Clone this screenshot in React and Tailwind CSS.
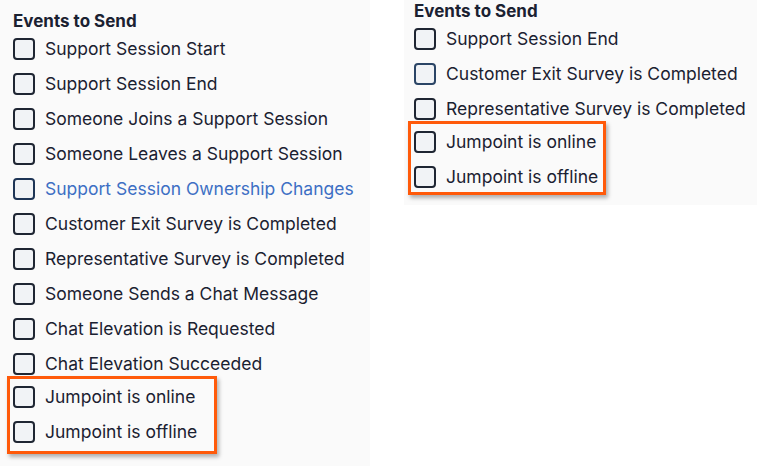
import React from "react";

const leftEvents = [
  { label: "Support Session Start" },
  { label: "Support Session End" },
  { label: "Someone Joins a Support Session" },
  { label: "Someone Leaves a Support Session" },
  { label: "Support Session Ownership Changes", hover: true },
  { label: "Customer Exit Survey is Completed" },
  { label: "Representative Survey is Completed" },
  { label: "Someone Sends a Chat Message" },
  { label: "Chat Elevation is Requested" },
  { label: "Chat Elevation Succeeded" },
];

const rightEvents = [
  { label: "Support Session End" },
  { label: "Customer Exit Survey is Completed", focus: true },
  { label: "Representative Survey is Completed" },
];

const jumpEvents = ["Jumpoint is online", "Jumpoint is offline"];

const EventRow = ({ label, hover, focus }) => {
  let boxColor = "border-[#1f2633]";
  if (hover) boxColor = "border-[#1e3556]";
  if (focus) boxColor = "border-[#2b4566]";

  return (
    <label className="flex h-[35px] shrink-0 items-center gap-[10px]">
      <span
        className={
          "block h-[22px] w-[22px] shrink-0 rounded-[4px] border-2 bg-[#f1f3f6] " +
          boxColor
        }
      />
      <span
        className={
          "text-[17.5px] leading-none whitespace-nowrap " +
          (hover ? "text-[#3d6fc4]" : "text-[#1a2131]")
        }
      >
        {label}
      </span>
    </label>
  );
};

// orange callout around the new jumpoint events
const Highlight = ({ children, className }) => (
  <div
    className={
      "-ml-[6px] flex flex-col border-[3px] border-[#ff5a0a] pl-[3px] shadow-[2px_3px_4px_rgba(0,0,0,0.3)] " +
      className
    }
  >
    {children}
  </div>
);

const EventsPanel = ({ events, className, boxClass }) => (
  <div className={className}>
    <h3 className="text-[17px] leading-[19px] font-bold text-[#1a2131]">
      Events to Send
    </h3>
    {events.map((ev) => (
      <EventRow key={ev.label} {...ev} />
    ))}
    <Highlight className={boxClass}>
      {jumpEvents.map((label) => (
        <EventRow key={label} label={label} />
      ))}
    </Highlight>
  </div>
);

export default function App() {
  return (
    <div
      className="flex h-[466px] w-[757px] items-start gap-[34px] bg-white"
      style={{ fontFamily: "Inter, 'Noto Sans', sans-serif" }}
    >
      <EventsPanel
        events={leftEvents}
        boxClass="-mt-[5px] w-[210px] h-[78px]"
        className="h-[466px] w-[370px] shrink-0 bg-[#fafafa] pt-[12px] pl-[13px]"
      />
      <EventsPanel
        events={rightEvents}
        boxClass="-mt-[5px] w-[198px] h-[74px]"
        className="h-[205px] flex-1 bg-[#fafafa] pt-[2px] pl-[10px]"
      />
    </div>
  );
}
